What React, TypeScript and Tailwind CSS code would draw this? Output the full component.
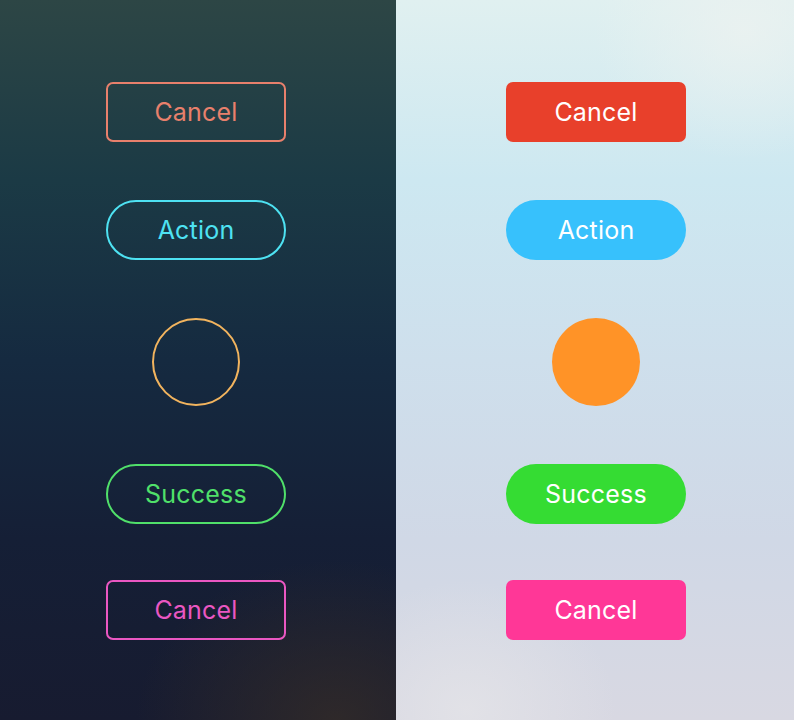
import React from "react";

const font = { fontFamily: "Inter, 'Open Sans', sans-serif" };

export default function App() {
  return (
    <div className="w-[794px] h-[720px] grid grid-cols-[396px_398px] overflow-hidden" style={font}>
      <div className="relative h-[720px] bg-[linear-gradient(180deg,#2d4645_0%,#1b3a45_25%,#152a40_50%,#151f36_75%,#171b30_100%)] overflow-hidden">
        <div className="absolute right-[-140px] bottom-[-160px] w-[400px] h-[320px] rounded-full bg-[radial-gradient(closest-side,rgba(52,44,40,0.8),rgba(40,36,40,0))]" />
        <div className="relative flex flex-col items-start pl-[106px] pt-[82px]">
          <button className="w-[180px] h-[60px] pt-[2px] rounded-[7px] border-2 border-[#e8806c] text-[#e8806c] text-[25px] tracking-[0.2px] flex items-center justify-center">Cancel</button>
          <button className="mt-[58px] w-[180px] h-[60px] pt-[2px] rounded-full border-2 border-[#4ee2f2] text-[#4ee2f2] text-[25px] tracking-[0.2px] flex items-center justify-center">Action</button>
          <div className="mt-[58px] ml-[46px] w-[88px] h-[88px] rounded-full border-2 border-[#f2b45e]" />
          <button className="mt-[58px] w-[180px] h-[60px] pt-[2px] rounded-full border-2 border-[#50e06a] text-[#50e06a] text-[25px] tracking-[0.2px] flex items-center justify-center">Success</button>
          <button className="mt-[56px] w-[180px] h-[60px] pt-[2px] rounded-[7px] border-2 border-[#ea57c2] text-[#ea57c2] text-[25px] tracking-[0.2px] flex items-center justify-center">Cancel</button>
        </div>
      </div>
      <div className="relative h-[720px] bg-[linear-gradient(180deg,#e0f0f0_0%,#cde8f1_25%,#cedfec_50%,#d0d8e6_75%,#d8d8e2_100%)] overflow-hidden">
        <div className="absolute right-[-100px] top-[-100px] w-[300px] h-[260px] rounded-full bg-[radial-gradient(closest-side,rgba(236,242,240,0.8),rgba(236,242,240,0))]" />
        <div className="absolute left-[-80px] bottom-[-120px] w-[300px] h-[260px] rounded-full bg-[radial-gradient(closest-side,rgba(228,228,232,0.8),rgba(228,228,232,0))]" />
        <div className="relative flex flex-col items-start pl-[110px] pt-[82px]">
          <button className="w-[180px] h-[60px] pt-[2px] rounded-[7px] bg-[#e8402b] text-white text-[25px] tracking-[0.2px] flex items-center justify-center">Cancel</button>
          <button className="mt-[58px] w-[180px] h-[60px] pt-[2px] rounded-full bg-[#37c1fc] text-white text-[25px] tracking-[0.2px] flex items-center justify-center">Action</button>
          <div className="mt-[58px] ml-[46px] w-[88px] h-[88px] rounded-full bg-[#ff9327]" />
          <button className="mt-[58px] w-[180px] h-[60px] pt-[2px] rounded-full bg-[#35dc33] text-white text-[25px] tracking-[0.2px] flex items-center justify-center">Success</button>
          <button className="mt-[56px] w-[180px] h-[60px] pt-[2px] rounded-[7px] bg-[#ff3797] text-white text-[25px] tracking-[0.2px] flex items-center justify-center">Cancel</button>
        </div>
      </div>
    </div>
  );
}
